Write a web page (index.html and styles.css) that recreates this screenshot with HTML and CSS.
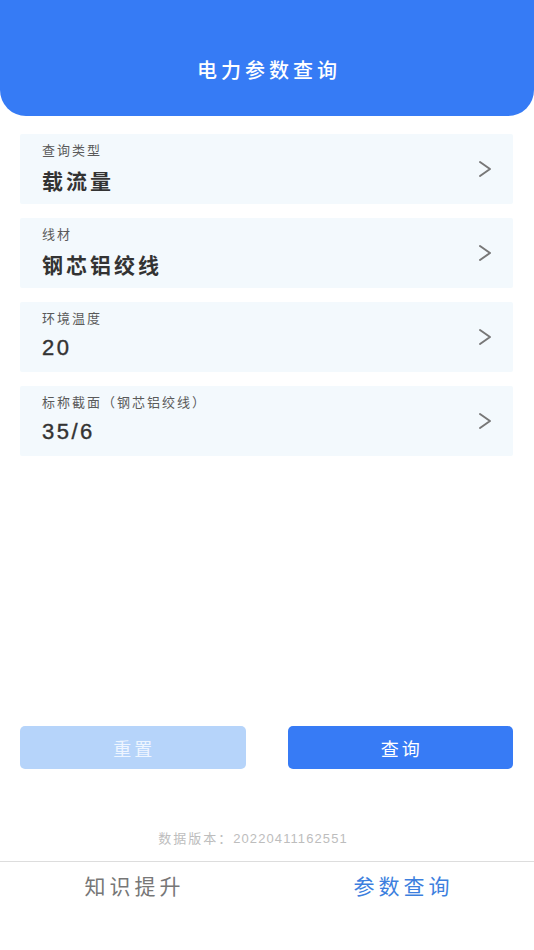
FILE: index.html
```html
<!DOCTYPE html>
<html lang="zh-CN">
<head>
<meta charset="utf-8">
<title>电力参数查询</title>
<link rel="stylesheet" href="styles.css">
</head>
<body>
<div class="page">
  <header class="header">
    <h1 class="title">电力参数查询</h1>
  </header>
  <main class="list">
    <div class="card">
      <div class="card-text">
        <div class="label">查询类型</div>
        <div class="value">载流量</div>
      </div>
      <svg class="chev" width="14" height="18" viewBox="0 0 14 18"><polyline points="2,2 12,9 2,16" fill="none" stroke="#777" stroke-width="2" stroke-linecap="round" stroke-linejoin="round"/></svg>
    </div>
    <div class="card">
      <div class="card-text">
        <div class="label">线材</div>
        <div class="value">钢芯铝绞线</div>
      </div>
      <svg class="chev" width="14" height="18" viewBox="0 0 14 18"><polyline points="2,2 12,9 2,16" fill="none" stroke="#777" stroke-width="2" stroke-linecap="round" stroke-linejoin="round"/></svg>
    </div>
    <div class="card">
      <div class="card-text">
        <div class="label">环境温度</div>
        <div class="value num">20</div>
      </div>
      <svg class="chev" width="14" height="18" viewBox="0 0 14 18"><polyline points="2,2 12,9 2,16" fill="none" stroke="#777" stroke-width="2" stroke-linecap="round" stroke-linejoin="round"/></svg>
    </div>
    <div class="card">
      <div class="card-text">
        <div class="label">标称截面（钢芯铝绞线）</div>
        <div class="value num">35/6</div>
      </div>
      <svg class="chev" width="14" height="18" viewBox="0 0 14 18"><polyline points="2,2 12,9 2,16" fill="none" stroke="#777" stroke-width="2" stroke-linecap="round" stroke-linejoin="round"/></svg>
    </div>
  </main>
  <div class="spacer"></div>
  <div class="actions">
    <button class="btn btn-reset">重置</button>
    <button class="btn btn-query">查询</button>
  </div>
  <div class="version"><span class="version-label">数据版本：</span><span class="version-num">20220411162551</span></div>
  <nav class="tabbar">
    <div class="tab">知识提升</div>
    <div class="tab tab-active">参数查询</div>
  </nav>
</div>
</body>
</html>
```

FILE: styles.css
```css
html, body {
  margin: 0;
  padding: 0;
  background: #ffffff;
}
body {
  font-family: "Noto Sans CJK SC", "Noto Sans", sans-serif;
}
.page {
  height: 950px;
  display: flex;
  flex-direction: column;
}
.header {
  height: 116px;
  box-sizing: border-box;
  padding-top: 56px;
  background: #367bf5;
  border-radius: 0 0 26px 26px;
}
.title {
  margin: 0;
  text-align: center;
  color: #ffffff;
  font-size: 20px;
  line-height: 28px;
  font-weight: 500;
  letter-spacing: 4px;
  text-indent: 4px;
}
.list {
  display: flex;
  flex-direction: column;
  gap: 14px;
  padding: 18px 21px 0 20px;
}
.card {
  height: 70px;
  box-sizing: border-box;
  background: #f3f9fd;
  border-radius: 2px;
  display: flex;
  align-items: center;
  padding: 0 21px 0 22px;
}
.card-text {
  flex: 1;
  display: flex;
  flex-direction: column;
  padding-bottom: 3px;
}
.label {
  font-size: 13px;
  line-height: 18px;
  color: #5a5a5a;
  letter-spacing: 2px;
}
.value {
  margin-top: 6px;
  font-size: 21px;
  line-height: 30px;
  font-weight: 700;
  color: #333333;
  letter-spacing: 3px;
}
.value.num {
  font-family: "Liberation Sans", "Noto Sans CJK SC", sans-serif;
  font-weight: 400;
  font-size: 22px;
  letter-spacing: 2.5px;
  -webkit-text-stroke: 0.4px #333333;
}
.chev {
  display: block;
}
.spacer {
  flex: 1;
}
.actions {
  display: flex;
  gap: 42px;
  padding: 0 21px 0 20px;
}
.btn {
  flex: 1;
  height: 43px;
  border: none;
  border-radius: 5px;
  font-family: inherit;
  font-size: 18px;
  letter-spacing: 3px;
  text-indent: 3px;
  color: #ffffff;
  padding: 0;
}
.btn-reset {
  background: #b6d4fa;
  color: #eef5ff;
}
.btn-query {
  background: #377bf5;
}
.version {
  margin-top: 60px;
  margin-bottom: 13px;
  padding-right: 28px;
  text-align: center;
  font-size: 13px;
  line-height: 18px;
  color: #bdbdbd;
}
.version-label {
  letter-spacing: 2px;
}
.version-num {
  font-family: "Liberation Sans", sans-serif;
  letter-spacing: 1.1px;
}
.tabbar {
  height: 89px;
  box-sizing: border-box;
  border-top: 1px solid #dddddd;
  display: flex;
  padding-top: 8px;
}
.tab {
  flex: 1;
  text-align: center;
  font-size: 21px;
  line-height: 30px;
  color: #777777;
  letter-spacing: 4px;
  text-indent: 4px;
}
.tab:first-child {
  padding-right: 4px;
}
.tab-active {
  color: #3d7fde;
}
```
